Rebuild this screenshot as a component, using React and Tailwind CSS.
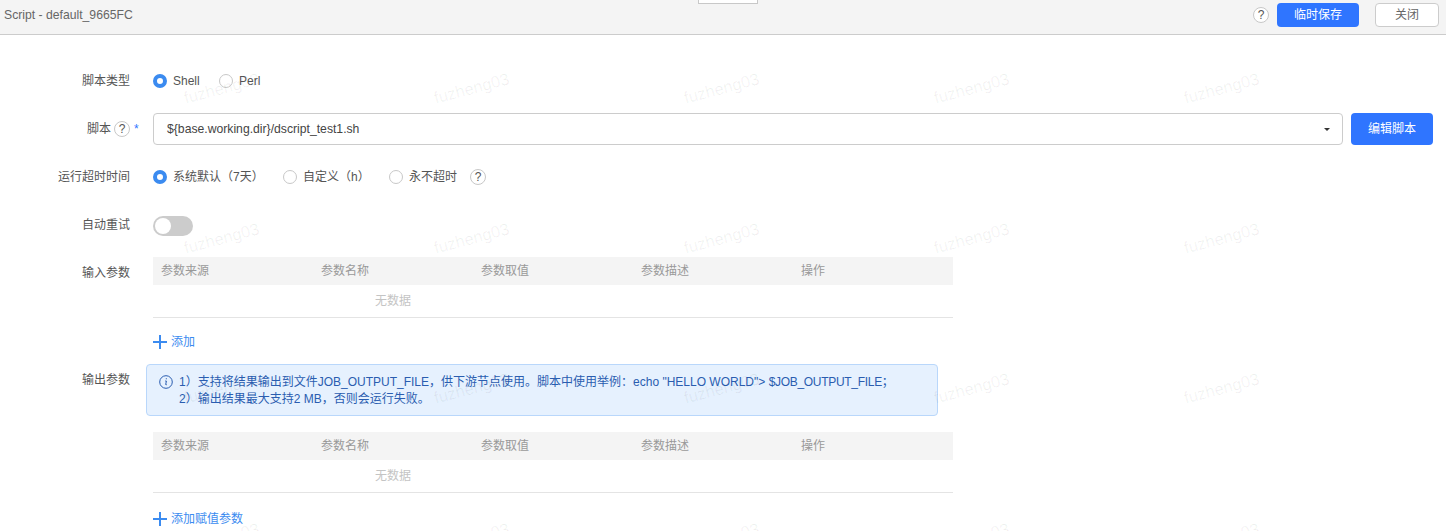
const fontStack = { fontFamily: '"Liberation Sans", "Noto Sans CJK SC", sans-serif' };

const columns = ["参数来源", "参数名称", "参数取值", "参数描述", "操作"];

function HelpIcon({ className = "" }) {
  return (
    <span
      className={`flex h-4 w-4 shrink-0 items-center justify-center rounded-full border border-[#c8c8c8] bg-white text-xs leading-none text-[#555] ${className}`}
    >
      ?
    </span>
  );
}

function Radio({ checked, label, className = "" }) {
  return (
    <span className={`flex items-center gap-1.5 ${className}`}>
      {checked ? (
        <span className="h-3.5 w-3.5 shrink-0 rounded-full border-[4px] border-[#3b8bf0] bg-white" />
      ) : (
        <span className="h-3.5 w-3.5 shrink-0 rounded-full border border-[#c8c8c8] bg-white" />
      )}
      <span className="text-xs text-[#555]">{label}</span>
    </span>
  );
}

function FormRow({ label, children, className = "", labelClass = "items-center" }) {
  return (
    <div className={`flex ${labelClass} ${className}`}>
      <div className="w-[130px] shrink-0 text-right text-xs text-[#555]">{label}</div>
      <div className="ml-[23px] min-w-0 flex-1">{children}</div>
    </div>
  );
}

function ParamTable() {
  return (
    <div className="w-[800px] border-b border-[#e4e4e4] text-xs">
      <div className="grid h-7 grid-cols-5 items-center bg-[#f4f4f4] text-[#999]">
        {columns.map((c) => (
          <div key={c} className="pl-2">
            {c}
          </div>
        ))}
      </div>
      <div className="flex h-8 w-[480px] items-center justify-center text-[#c4c4c4]">无数据</div>
    </div>
  );
}

function AddLink({ children }) {
  return (
    <div className="flex items-center gap-1 text-xs text-[#3b8bf0]">
      <svg width="14" height="14" viewBox="0 0 14 14" className="shrink-0">
        <path d="M7 0v14M0 7h14" stroke="#3b8bf0" strokeWidth="2" />
      </svg>
      {children}
    </div>
  );
}

function Watermarks() {
  const rows = [88, 238, 388, 538];
  const cols = [183, 433, 683, 933, 1183];
  return (
    <div className="pointer-events-none absolute inset-0">
      {rows.map((top) =>
        cols.map((left) => (
          <span
            key={`${top}-${left}`}
            className="absolute -rotate-[15deg] text-[16.5px] leading-none text-black/[0.06]"
            style={{ top: top - 8, left }}
          >
            fuzheng03
          </span>
        ))
      )}
    </div>
  );
}

export default function App() {
  return (
    <div className="relative h-[531px] overflow-hidden bg-white" style={fontStack}>
      <div className="relative flex h-[35px] items-start border-b border-[#cccccc] bg-[#f4f4f4] pl-1">
        <span className="mt-[8px] text-[12.2px] leading-[14px] text-[#666]">Script - default_9665FC</span>
        <span className="absolute left-[698px] top-0 h-1 w-[60px] border-x border-b border-[#c8c8c8] bg-white" />
        <div className="ml-auto mr-[7px] mt-[3px] flex items-center">
          <HelpIcon />
          <button type="button" className="ml-2 h-[24px] w-[82px] rounded-sm bg-[#2f75ff] text-xs text-white">
            临时保存
          </button>
          <button
            type="button"
            className="ml-4 h-[24px] w-[64px] rounded-sm border border-[#cccccc] bg-white text-xs text-[#666]"
          >
            关闭
          </button>
        </div>
      </div>

      <div className="relative pr-[13px] pt-[30px]">
        <FormRow label="脚本类型" className="h-8">
          <div className="flex items-center">
            <Radio checked label="Shell" className="w-[66px]" />
            <Radio label="Perl" />
          </div>
        </FormRow>

        <FormRow
          className="mt-[16px] h-8"
          label={
            <span className="flex items-center justify-end">
              脚本
              <HelpIcon className="ml-[3px]" />
              <span className="-mr-1 ml-1 w-0 text-[#2f75ff]">*</span>
            </span>
          }
        >
          <div className="flex items-center">
            <div className="flex h-8 flex-1 items-center rounded-sm border border-[#cccccc] bg-white pl-[13px] pr-3 text-[12.2px] text-[#444]">
              {"${base.working.dir}/dscript_test1.sh"}
              <span className="ml-auto h-0 w-0 border-x-[3px] border-t-[3px] border-x-transparent border-t-[#333]" />
            </div>
            <button type="button" className="ml-2 h-8 w-[82px] rounded-sm bg-[#2f75ff] text-xs text-white">
              编辑脚本
            </button>
          </div>
        </FormRow>

        <FormRow label="运行超时时间" className="mt-[16px] h-8">
          <div className="flex items-center">
            <Radio checked label="系统默认（7天）" className="w-[130px]" />
            <Radio label="自定义（h）" className="w-[106px]" />
            <Radio label="永不超时" />
            <HelpIcon className="ml-[13px]" />
          </div>
        </FormRow>

        <FormRow label={<div className="pb-0.5">自动重试</div>} className="mt-[17px] h-8">
          <div className="flex h-5 w-10 items-center rounded-full bg-[#cccccc] pl-0.5">
            <span className="h-4 w-4 rounded-full bg-white" />
          </div>
        </FormRow>

        <FormRow label={<div className="pt-2">输入参数</div>} className="mt-[15px]" labelClass="items-start">
          <ParamTable />
        </FormRow>

        <div className="ml-[153px] mt-[16px]">
          <AddLink>添加</AddLink>
        </div>

        <FormRow label={<div className="pt-2">输出参数</div>} className="mt-[14px]" labelClass="items-start">
          <div className="-ml-[7px] h-[52px] w-[792px] rounded border border-[#b9d7fb] bg-[#e6f1fe] pl-3 pt-[9px] text-xs leading-[17px] text-[#2a5db0]">
            <div className="flex">
              <svg width="14" height="14" viewBox="0 0 14 14" className="mt-[1px] shrink-0">
                <circle cx="7" cy="7" r="6.3" fill="none" stroke="#2a5db0" strokeWidth="1" />
                <path d="M7.3 3.2v1.1M6.2 6h1.2l-.7 3.6c0 .4.5.4 1.1 0" fill="none" stroke="#2a5db0" strokeWidth="1" />
              </svg>
              <div className="ml-[6px]">
                <div>
                  1）支持将结果输出到文件JOB_OUTPUT_FILE，供下游节点使用。脚本中使用举例：echo "HELLO WORLD"&gt;{" "}
                  <span className="tracking-[-0.3px]">$JOB_OUTPUT_FILE；</span>
                </div>
                <div>2）输出结果最大支持2 MB，否则会运行失败。</div>
              </div>
            </div>
          </div>
          <div className="mt-4">
            <ParamTable />
          </div>
        </FormRow>

        <div className="ml-[153px] mt-[18px]">
          <AddLink>添加赋值参数</AddLink>
        </div>
      </div>

      <Watermarks />
    </div>
  );
}
